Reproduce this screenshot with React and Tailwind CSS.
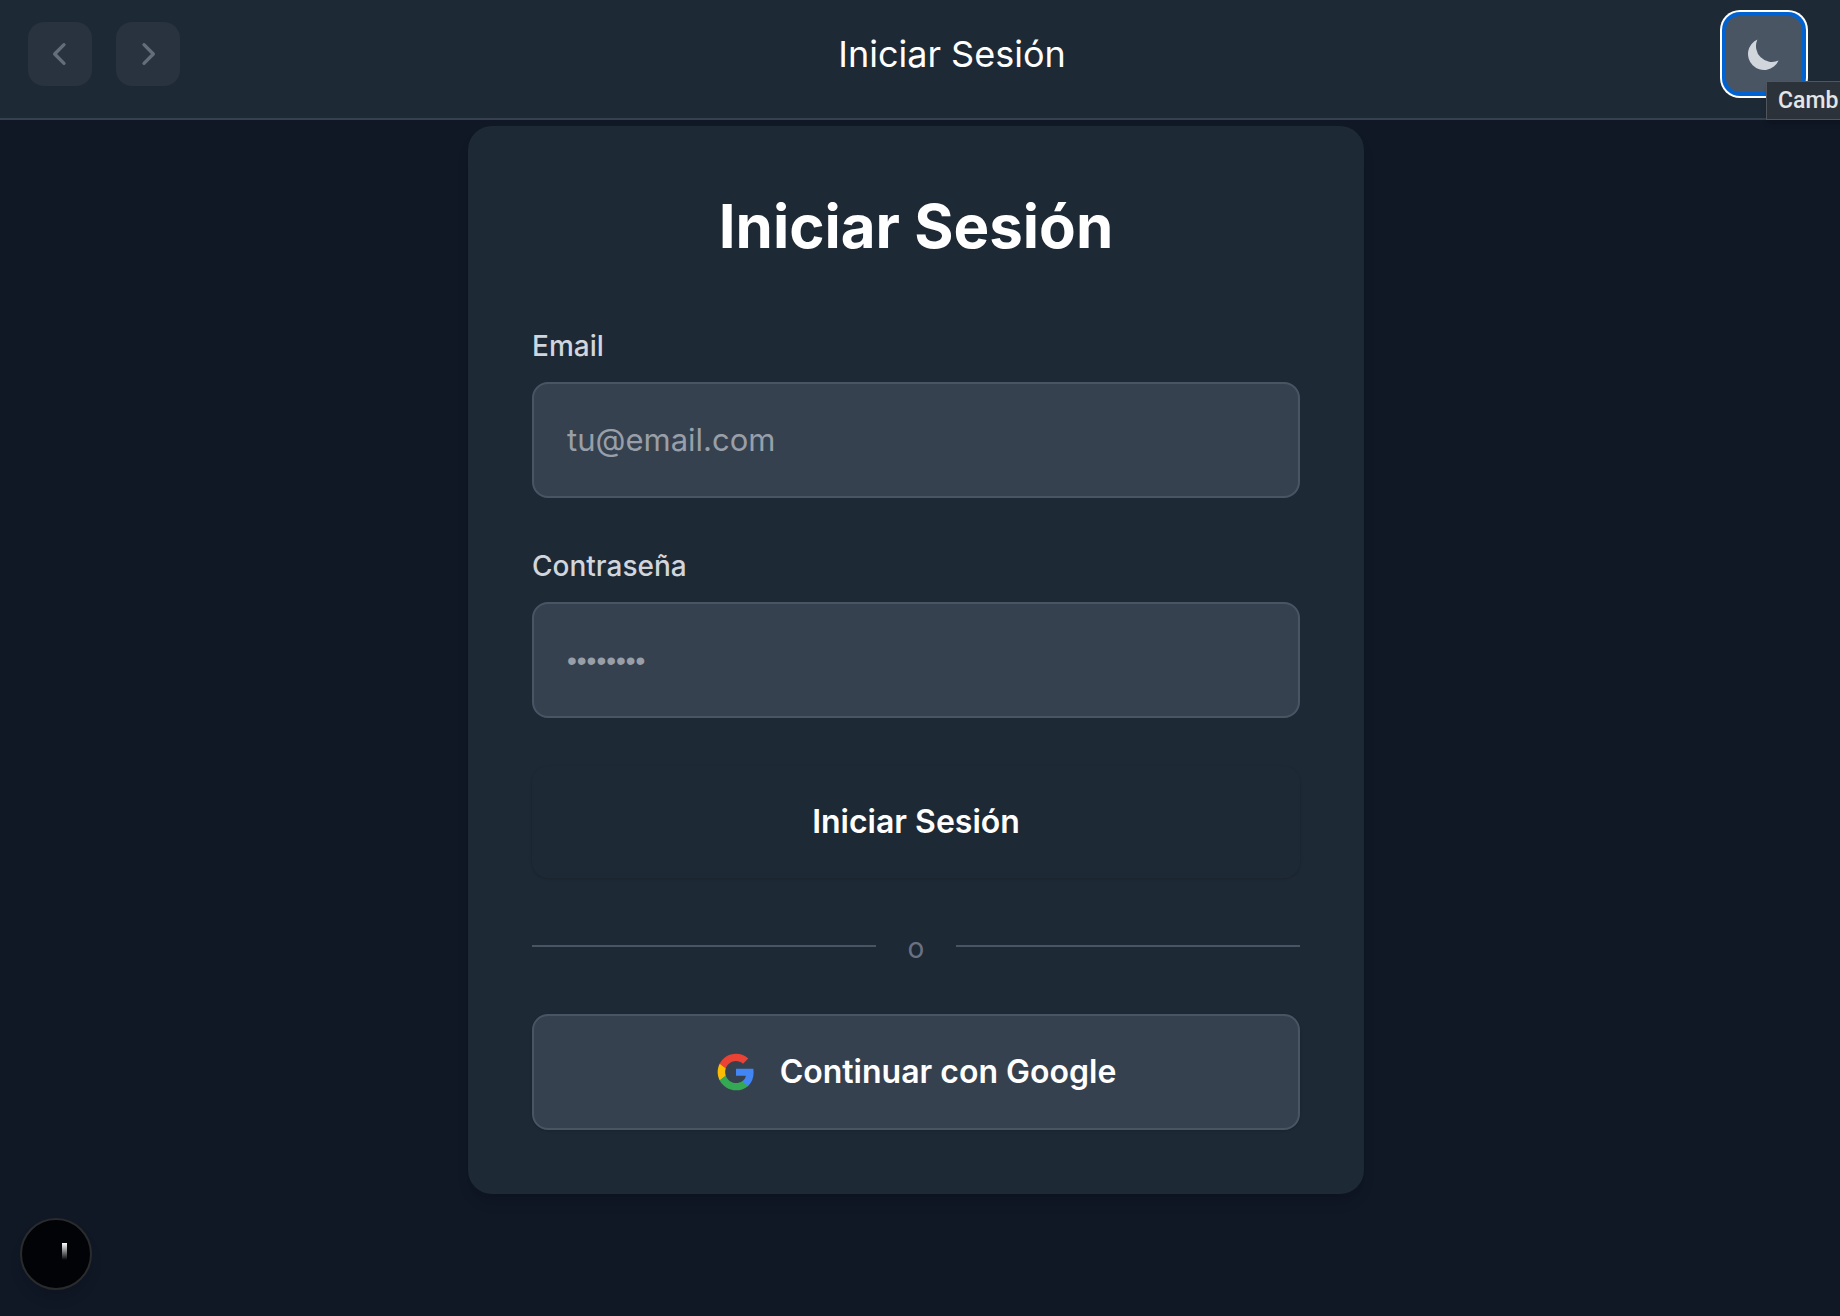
function Chevron({ d }) {
  return (
    <svg className="size-8" viewBox="0 0 24 24" fill="none" stroke="currentColor" strokeWidth="2.5" strokeLinecap="round" strokeLinejoin="round" aria-hidden="true">
      <path d={d} />
    </svg>
  );
}

function NavButton({ label, d }) {
  return (
    <button type="button" aria-label={label} className="flex size-16 items-center justify-center rounded-2xl bg-[#28333f] text-[#646e7b]">
      <Chevron d={d} />
    </button>
  );
}

function Header() {
  return (
    <header className="flex items-center justify-between border-b-2 border-[#36414f] bg-[#1e2936] pt-3.5 pr-9 pb-6 pl-7">
      <nav className="flex gap-6">
        <NavButton label="Atrás" d="M15 19l-7-7 7-7" />
        <NavButton label="Adelante" d="M9 5l7 7-7 7" />
      </nav>
      <p className="text-4xl text-white">Iniciar Sesión</p>
      <div className="relative">
        <button
          type="button"
          aria-label="Cambiar tema"
          className="flex size-20 items-center justify-center rounded-2xl border-2 border-[#0062d1] bg-[#4a5564] text-[#d1d5dc] shadow-[0_0_0_2px_#0062d1,0_0_0_4px_#ffffff]"
        >
          <svg className="size-10" viewBox="0 0 20 20" fill="currentColor" aria-hidden="true">
            <path d="M17.293 13.293A8 8 0 016.707 2.707a8.001 8.001 0 1010.586 10.586z" />
          </svg>
        </button>
        <span role="tooltip" className="absolute top-[67px] left-[42px] w-[100px] border border-[#50565b] bg-[#2b323a] pl-[11px] font-['Roboto',sans-serif] text-[23px] leading-[37px] font-medium text-[#e3e5e6] shadow-md">
          Camb
        </span>
      </div>
    </header>
  );
}

function Field({ id, label, type, placeholder, className }) {
  return (
    <div>
      <label htmlFor={id} className="mb-4 block text-[28px] leading-10 font-medium text-[#d1d5dc]">
        {label}
      </label>
      <input
        id={id}
        type={type}
        placeholder={placeholder}
        className={"block h-[116px] w-full rounded-2xl border-2 border-[#4a5564] bg-[#364150] px-[33px] text-white placeholder:text-[#999fa8] " + className}
      />
    </div>
  );
}

function GoogleLogo() {
  return (
    <svg className="size-10" viewBox="0 0 24 24" aria-hidden="true">
      <path fill="#4285F4" d="M22.56 12.25c0-.78-.07-1.53-.2-2.25H12v4.26h5.92c-.26 1.37-1.04 2.53-2.21 3.31v2.77h3.57c2.08-1.92 3.28-4.74 3.28-8.09z" />
      <path fill="#34A853" d="M12 23c2.97 0 5.46-.98 7.28-2.66l-3.57-2.77c-.98.66-2.23 1.06-3.71 1.06-2.86 0-5.29-1.93-6.16-4.53H2.18v2.84C3.99 20.53 7.7 23 12 23z" />
      <path fill="#FBBC05" d="M5.84 14.09c-.22-.66-.35-1.36-.35-2.09s.13-1.43.35-2.09V7.07H2.18C1.43 8.55 1 10.22 1 12s.43 3.45 1.18 4.93l2.85-2.22.81-.62z" />
      <path fill="#EA4335" d="M12 5.38c1.62 0 3.06.56 4.21 1.64l3.15-3.15C17.45 2.09 14.97 1 12 1 7.7 1 3.99 3.47 2.18 7.07l3.66 2.84c.87-2.6 3.3-4.53 6.16-4.53z" />
    </svg>
  );
}

export default function App() {
  return (
    <div className="min-h-screen overflow-x-hidden bg-[#101725] font-['Inter',sans-serif]">
      <Header />
      <main className="pt-1.5 pr-2">
        <section className="mx-auto max-w-4xl rounded-3xl bg-[#1e2936] px-16 py-16 shadow-lg">
          <h1 className="mb-16 text-center text-[60px] leading-[72px] font-bold text-white">Iniciar Sesión</h1>
          <form className="flex flex-col gap-12" onSubmit={(e) => e.preventDefault()}>
            <Field id="email" label="Email" type="email" placeholder="tu@email.com" className="pb-0.5 text-[31px]" />
            <Field id="password" label="Contraseña" type="password" placeholder="••••••••" className="pt-0.5 font-['Liberation_Sans',sans-serif] text-[28px]" />
            <button type="submit" className="h-28 rounded-2xl bg-[#1e2936] text-[32px] font-semibold text-white shadow-sm">
              Iniciar Sesión
            </button>
          </form>
          <div className="my-12 flex items-center gap-8 text-[28px] leading-9 text-[#6a7282]">
            <span className="h-0.5 flex-1 bg-[#4a5564]" />
            <span className="pt-1">o</span>
            <span className="h-0.5 flex-1 bg-[#4a5564]" />
          </div>
          <button type="button" className="flex h-[116px] w-full items-center justify-center gap-6 rounded-2xl border-2 border-[#4a5564] bg-[#364150] text-[32px] font-semibold text-white shadow-sm">
            <GoogleLogo />
            Continuar con Google
          </button>
        </section>
      </main>
      <button type="button" aria-label="Herramientas de desarrollo" className="fixed bottom-[26px] left-5 flex size-18 items-center justify-center rounded-full border-2 border-[#2a2b2d] bg-[#020306] shadow-lg">
        <svg className="size-16" viewBox="0 0 64 64" aria-hidden="true">
          <defs>
            <linearGradient id="bar" x1="0" y1="0" x2="0" y2="1">
              <stop offset="0" stopColor="#fff" />
              <stop offset="1" stopColor="#fff" stopOpacity="0" />
            </linearGradient>
          </defs>
          <rect x="38" y="21" width="5" height="17" fill="url(#bar)" />
        </svg>
      </button>
    </div>
  );
}
